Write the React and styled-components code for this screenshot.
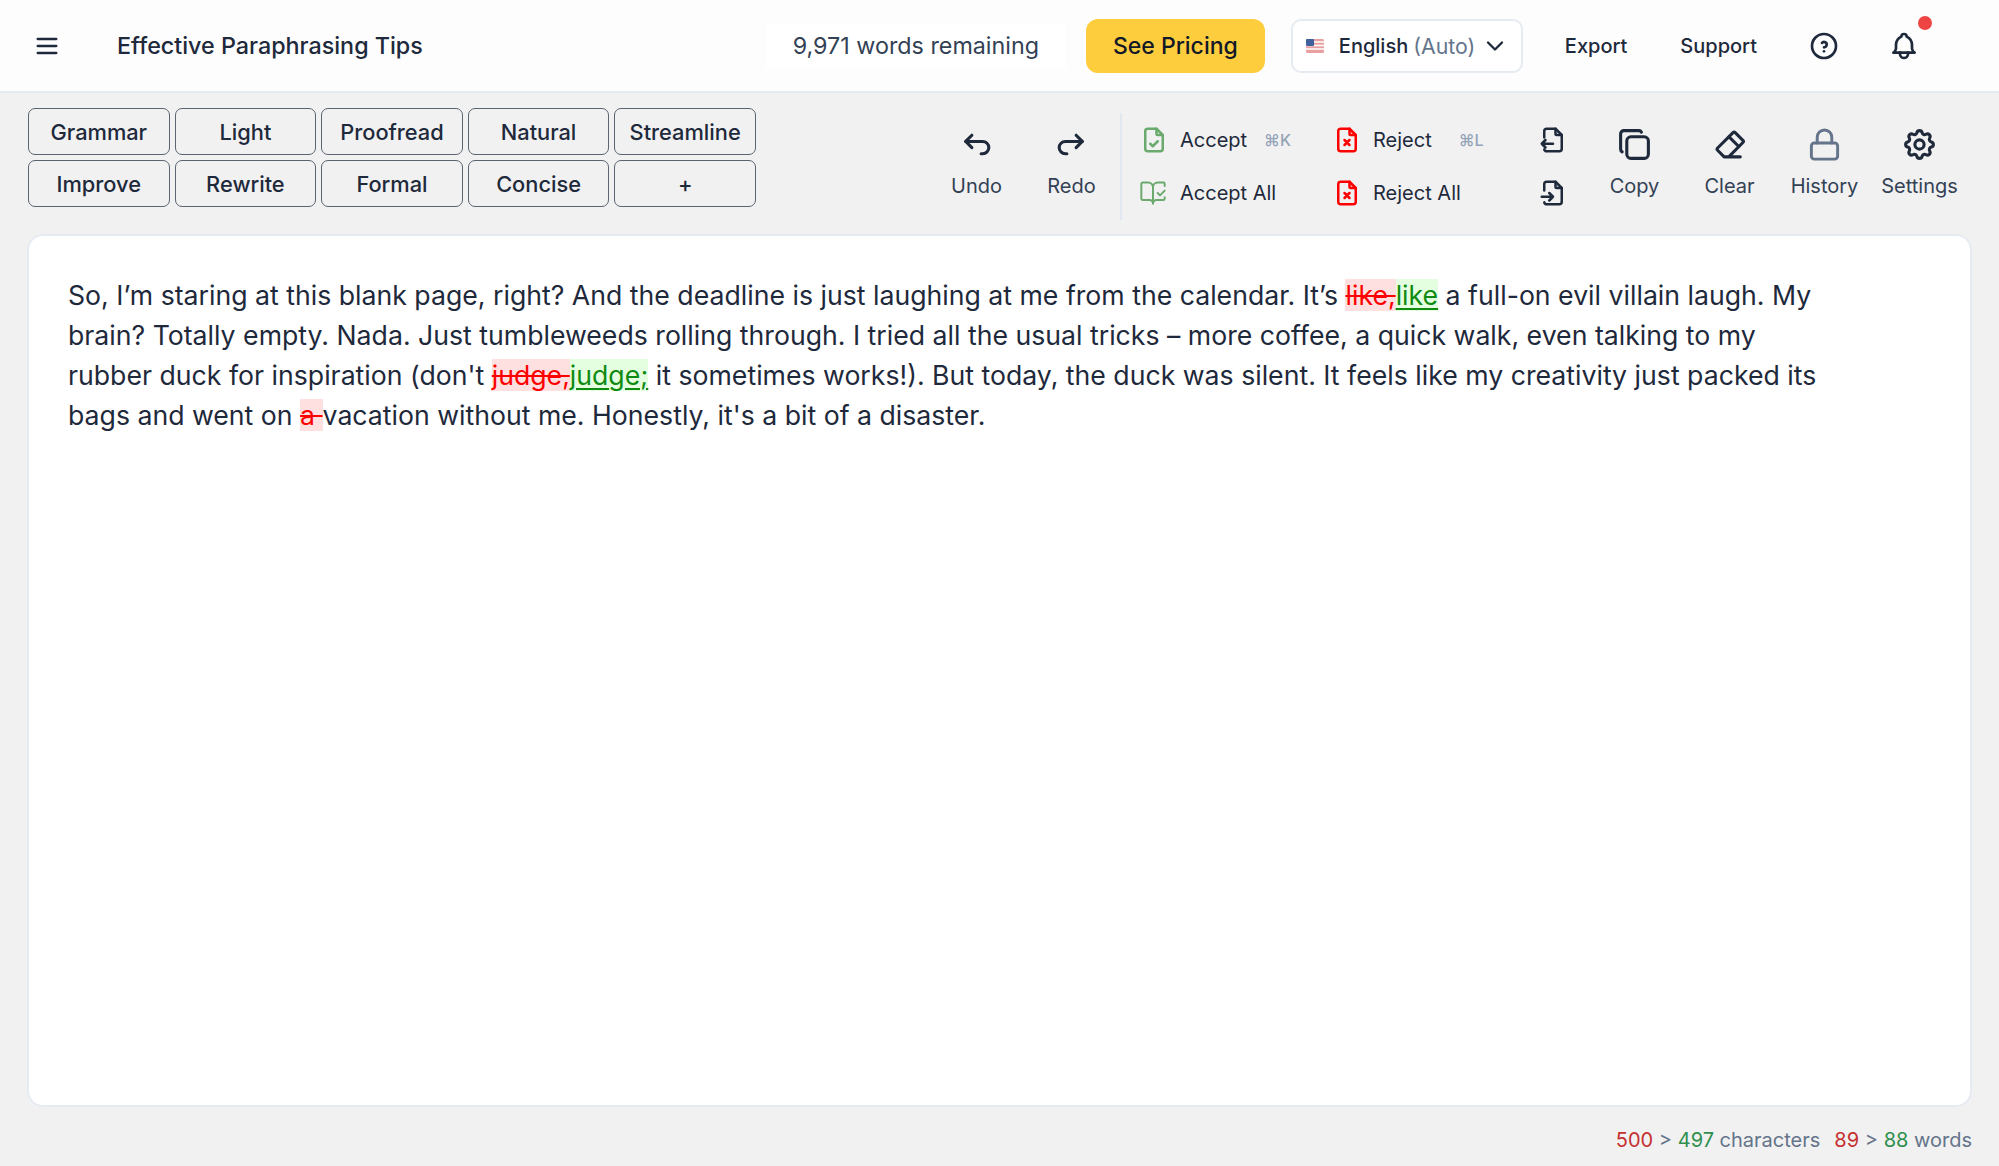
import React from "react";
import styled, { createGlobalStyle } from "styled-components";
import { BookOpenCheck, Lock } from "lucide-react";
import {
  TbArrowBackUp, TbArrowForwardUp, TbBell, TbChevronDown, TbCopy, TbEraser, TbFileCheck,
  TbFileX, TbHelpCircle, TbMenu2, TbSettings,
} from "react-icons/tb";

const Global = createGlobalStyle`
  html, body { margin: 0; padding: 0; background: #f1f1f1; }
  body { font-family: Inter, "Liberation Sans", sans-serif; color: #1e293b; }
  * { box-sizing: border-box; }
`;

const Page = styled.div`
  width: 1999px; height: 1166px; display: flex; flex-direction: column; overflow: hidden; background: #f1f1f1;
`;
const Header = styled.header`
  height: 93px; flex: none; display: flex; align-items: center; background: #fdfdfd;
  border-bottom: 2px solid #e6ebf2; padding: 0 0 0 33px;
`;
const MenuBtn = styled.span`display: flex; color: #1e293b; width: 28px; margin-right: 56px;`;
const Title = styled.div`font-size: 23.3px; font-weight: 500; color: #1e293b; white-space: nowrap;`;
const HeaderRight = styled.div`margin-left: auto; display: flex; align-items: center; height: 100%;`;
const Remaining = styled.div`
  width: 300px; height: 46px; background: #fff; font-size: 23.3px; color: #334155;
  display: flex; align-items: center; justify-content: center; margin-right: 20px;
`;
const Pricing = styled.div`
  width: 179px; height: 54px; border-radius: 12px; background: #fecd3e; color: #111827; font-size: 23px; font-weight: 500;
  display: flex; align-items: center; justify-content: center; margin-right: 26px;
`;
const Lang = styled.div`
  width: 232px; height: 54px; border: 2px solid #e6ebf2; border-radius: 10px; background: #fff;
  display: flex; align-items: center; padding-left: 13px; font-size: 20px; font-weight: 500; color: #1e293b; margin-right: 42px;
`;
const Flag = styled.svg`width: 18px; height: 14px; margin-right: 15px; flex: none;`;
const Auto = styled.span`color: #64748b; font-size: 21.3px; font-weight: 400; margin-left: 5px;`;
const Chevron = styled.span`display: flex; margin-left: 6px;`;
const NavLink = styled.div`font-size: 20px; font-weight: 500; color: #1e293b; margin-right: ${p => p.$mr}px;`;
const RoundIcon = styled.span`display: flex; color: #1e293b; position: relative; margin-right: ${p => p.$mr}px;`;
const Dot = styled.span`
  position: absolute; width: 14px; height: 14px; border-radius: 50%; background: #ef4444; top: -14px; right: -12px;
`;

const Toolbar = styled.div`
  height: 141px; flex: none; display: flex; justify-content: space-between; padding: 15px 32px 0 28px;
`;
const PresetGrid = styled.div`
  display: grid; grid-template-columns: repeat(5, 141.6px); grid-auto-rows: 47px; column-gap: 5px; row-gap: 5px; align-content: start;
`;
const Preset = styled.div`
  border: 1.5px solid #5b6470; border-radius: 7px; display: flex; align-items: center; justify-content: center;
  font-size: 21.8px; font-weight: 500; color: #1e293b;
`;
const Actions = styled.div`display: flex; align-items: flex-start;`;
const ToolCol = styled.div`
  width: 95px; height: 107px; display: flex; flex-direction: column; align-items: center; padding-top: 18px;
  font-size: 20px; color: #334155;
`;
const IconSlot = styled.span`height: 36px; display: flex; align-items: center; color: ${p => p.$c || "#1e293b"};`;
const ToolLabel = styled.span`margin-top: 12px; line-height: 24px;`;
const Divider = styled.div`width: 2px; height: 107px; background: #e2e8f0; margin: 5px 21px 0 1px;`;
const ReviewGrid = styled.div`
  display: grid; grid-template-columns: 193px 193px; grid-auto-rows: 52.5px; padding-top: 6px; margin-right: 4px;
`;
const ReviewItem = styled.div`
  display: flex; align-items: center; font-size: 20px; color: #1e293b;
`;
const ReviewIcon = styled.span`
  width: 41px; display: flex; justify-content: flex-start; margin-left: -4px; color: ${p => p.$c};
`;
const Kbd = styled.span`font-size: 16px; color: #94a3b8; margin-left: ${p => p.$ml}px; font-weight: 500;`;
const FileCol = styled.div`
  width: 40px; display: flex; flex-direction: column; align-items: center; padding-top: 6px; color: #1e293b; margin-right: 14px;
`;
const FileSlot = styled.span`height: 52.5px; display: flex; align-items: center;`;

const Card = styled.main`
  flex: none; height: 873px; margin: 0 27px 0 27px; background: #fff; border: 2px solid #e6ebf2; border-radius: 16px;
  padding: 39px 142px 39px 39px; font-size: 26.67px; line-height: 40px; color: #1e293b;
`;
const Del = styled.span`
  background: #ffe0e0; color: #ff0000; text-decoration: line-through; text-decoration-thickness: 2px;
`;
const Ins = styled.span`
  background: #e4ffe0; color: #118a11; text-decoration: underline; text-decoration-thickness: 2px; text-underline-offset: 3px;
`;
const Footer = styled.footer`
  flex: 1; display: flex; align-items: center; justify-content: flex-end; padding: 7px 27px 0 0; font-size: 20px; color: #64748b;
`;
const Old = styled.span`color: #c53030;`;
const New = styled.span`color: #2f8f4e;`;
const Stat = styled.span`margin-left: ${p => p.$ml || 0}px; white-space: pre;`;

const FileArrow = ({ arrow }) => (
  <svg width="30" height="30" viewBox="0 0 24 24" fill="none" stroke="currentColor" strokeWidth="2" strokeLinecap="round" strokeLinejoin="round">
    <path d="M14 3v4a1 1 0 0 0 1 1h4" />
    <path d="M5 10V5a2 2 0 0 1 2-2h7l5 5v11a2 2 0 0 1-2 2H7a2 2 0 0 1-2-1.5" />
    <path d={arrow} />
  </svg>
);

const presets = ["Grammar", "Light", "Proofread", "Natural", "Streamline", "Improve", "Rewrite", "Formal", "Concise", "+"];

export default function App() {
  return (
    <Page>
      <Global />
      <Header>
        <MenuBtn><TbMenu2 size={28} /></MenuBtn>
        <Title>Effective Paraphrasing Tips</Title>
        <HeaderRight>
          <Remaining>9,971 words remaining</Remaining>
          <Pricing>See Pricing</Pricing>
          <Lang>
            <Flag viewBox="0 0 18 14">
              <rect width="18" height="14" rx="1.5" fill="#e8a0a0" />
              <path d="M0 3h18M0 6.5h18M0 10h18" stroke="#fff" strokeWidth="1.4" />
              <rect width="8" height="7" rx="1" fill="#41619c" />
            </Flag>
            English<Auto>(Auto)</Auto>
            <Chevron><TbChevronDown size={28} /></Chevron>
          </Lang>
          <NavLink $mr={53}>Export</NavLink>
          <NavLink $mr={51}>Support</NavLink>
          <RoundIcon $mr={48}><TbHelpCircle size={32} /></RoundIcon>
          <RoundIcon $mr={79}><TbBell size={32} /><Dot /></RoundIcon>
        </HeaderRight>
      </Header>
      <Toolbar>
        <PresetGrid>
          {presets.map(p => <Preset key={p}>{p}</Preset>)}
        </PresetGrid>
        <Actions>
          <ToolCol><IconSlot><TbArrowBackUp size={37} /></IconSlot><ToolLabel>Undo</ToolLabel></ToolCol>
          <ToolCol><IconSlot><TbArrowForwardUp size={37} /></IconSlot><ToolLabel>Redo</ToolLabel></ToolCol>
          <Divider />
          <ReviewGrid>
            <ReviewItem><ReviewIcon $c="#6aaa6e"><TbFileCheck size={30} /></ReviewIcon>Accept<Kbd $ml={17}>⌘K</Kbd></ReviewItem>
            <ReviewItem><ReviewIcon $c="#ff0000"><TbFileX size={30} /></ReviewIcon>Reject<Kbd $ml={27}>⌘L</Kbd></ReviewItem>
            <ReviewItem><ReviewIcon $c="#6aaa6e"><BookOpenCheck size={28} strokeWidth={1.7} /></ReviewIcon>Accept All</ReviewItem>
            <ReviewItem><ReviewIcon $c="#ff0000"><TbFileX size={30} /></ReviewIcon>Reject All</ReviewItem>
          </ReviewGrid>
          <FileCol>
            <FileSlot><FileArrow arrow="M12 15H3m3-3l-3 3 3 3" /></FileSlot>
            <FileSlot><FileArrow arrow="M3 15h9m-3-3l3 3-3 3" /></FileSlot>
          </FileCol>
          <ToolCol><IconSlot><TbCopy size={37} /></IconSlot><ToolLabel>Copy</ToolLabel></ToolCol>
          <ToolCol><IconSlot><TbEraser size={37} /></IconSlot><ToolLabel>Clear</ToolLabel></ToolCol>
          <ToolCol><IconSlot $c="#64748b"><Lock size={35} /></IconSlot><ToolLabel>History</ToolLabel></ToolCol>
          <ToolCol><IconSlot><TbSettings size={37} /></IconSlot><ToolLabel>Settings</ToolLabel></ToolCol>
        </Actions>
      </Toolbar>
      <Card>
        So, I’m staring at this blank page, right? And the deadline is just laughing at me from the calendar. It’s <Del>like,</Del><Ins>like</Ins> a full-on evil villain laugh. My brain? Totally empty. Nada. Just tumbleweeds rolling through. I tried all the usual tricks – more coffee, a quick walk, even talking to my rubber duck for inspiration (don't <Del>judge,</Del><Ins>judge;</Ins> it sometimes works!). But today, the duck was silent. It feels like my creativity just packed its bags and went on <Del>a </Del>vacation without me. Honestly, it's a bit of a disaster.
      </Card>
      <Footer>
        <Stat><Old>500</Old> &gt; <New>497</New> characters</Stat>
        <Stat $ml={14}><Old>89</Old> &gt; <New>88</New> words</Stat>
      </Footer>
    </Page>
  );
}
